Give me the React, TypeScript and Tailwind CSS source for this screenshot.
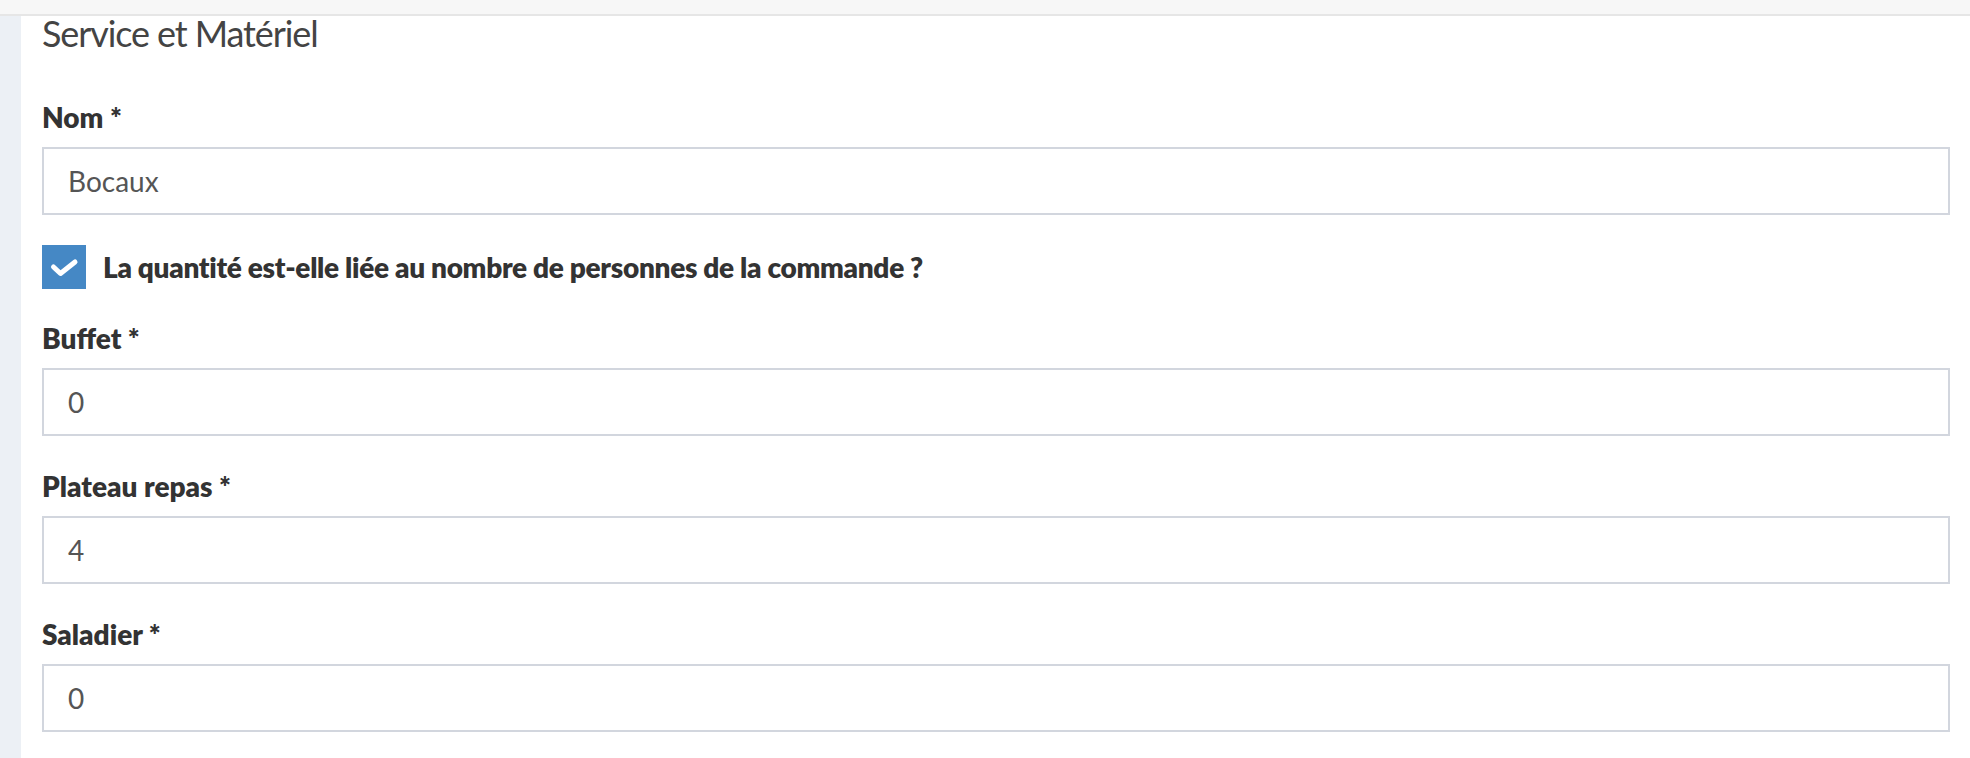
import React from "react";

const fields = [
  { label: "Buffet *", value: "0" },
  { label: "Plateau repas *", value: "4" },
  { label: "Saladier *", value: "0" },
];

function Field({ label, value, className = "" }: { label: string; value: string; className?: string }) {
  return (
    <div className={className}>
      <label className="block text-[28px] leading-[40px] font-extrabold text-[#333] mb-[10px]">{label}</label>
      <div className="h-[68px] border-2 border-[#d2d6de] bg-white flex items-center pl-[24px] text-[28px] text-[#555]">
        {value}
      </div>
    </div>
  );
}

export default function App() {
  return (
    <div className="w-full h-[758px] overflow-hidden bg-white flex flex-col" style={{ fontFamily: "Lato, 'Noto Sans', sans-serif" }}>
      <div className="h-[16px] shrink-0 bg-[#f7f7f7] border-b-2 border-[#e6e6e6]" />
      <div className="flex flex-1">
        <div className="w-[21px] shrink-0 bg-[#ecf0f5]" />
        <div className="flex-1 bg-white pl-[21px] pr-[20px]">
          <h3 className="text-[36px] leading-[36px] text-[#444] font-normal tracking-[-1.1px] -mt-[1px]">Service et Matériel</h3>
          <Field className="mt-[46px]" label="Nom *" value="Bocaux" />
          <div className="mt-[30px] h-[44px] flex items-center gap-[17px]">
            <div className="w-[44px] h-[44px] bg-[#4588c5] flex items-center justify-center shrink-0">
              <svg width="44" height="44" viewBox="0 0 44 44" className="block">
                <polyline points="11.5,22 18.5,28.5 33,17" fill="none" stroke="white" strokeWidth="5" strokeLinecap="round" strokeLinejoin="round" />
              </svg>
            </div>
            <span className="text-[28px] font-extrabold tracking-[-0.3px] text-[#333]">La quantité est-elle liée au nombre de personnes de la commande ?</span>
          </div>
          {fields.map((f, i) => (
            <Field key={i} className={i === 0 ? "mt-[29px]" : "mt-[30px]"} label={f.label} value={f.value} />
          ))}
        </div>
      </div>
    </div>
  );
}
